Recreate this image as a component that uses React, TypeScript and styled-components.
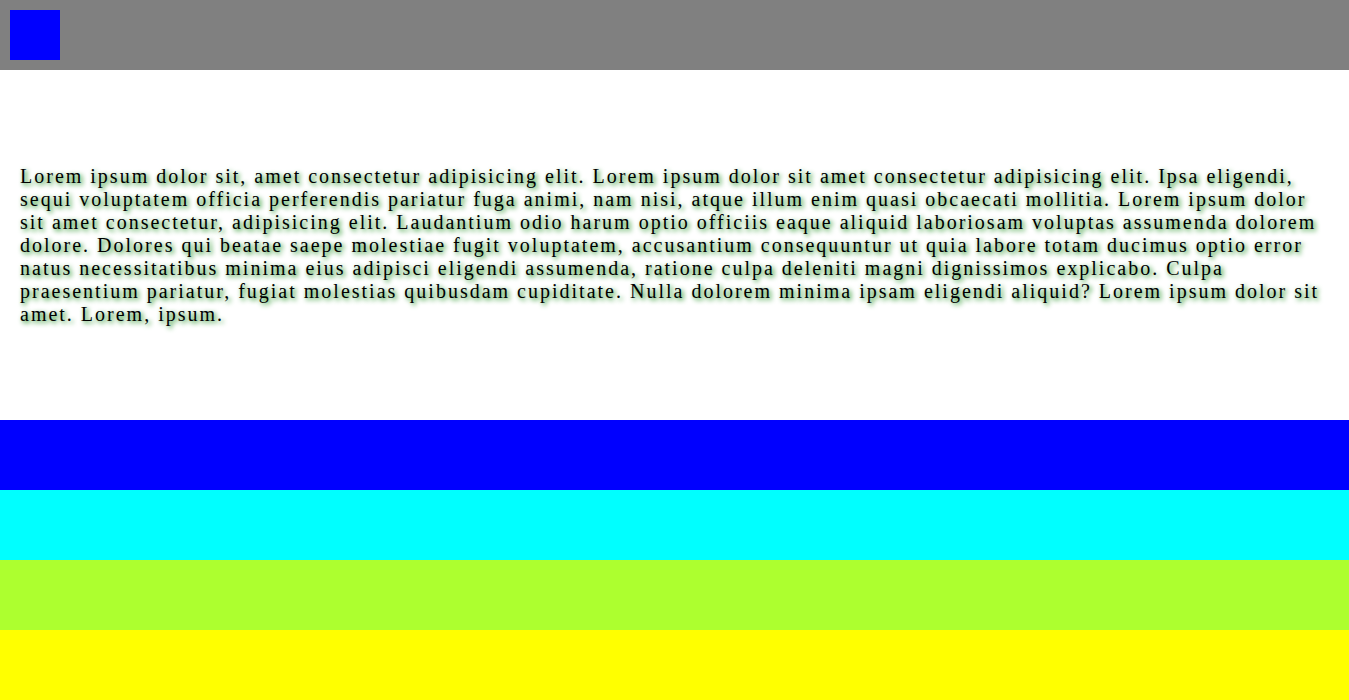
import React from "react";
import styled, { createGlobalStyle } from "styled-components";

const Global = createGlobalStyle`
  html, body { margin: 0; padding: 0; }
  body { font-family: "Liberation Serif", "Times New Roman", serif; background: #fff; }
`;

const Header = styled.header`
  height: 70px;
  background: #808080;
  padding: 10px;
  box-sizing: border-box;
`;

const Logo = styled.div`
  width: 50px;
  height: 50px;
  background: #0000ff;
`;

const Main = styled.main`
  height: 350px;
  display: flex;
  align-items: center;
  padding: 0 20px;
  box-sizing: border-box;
`;

const Text = styled.p`
  margin: 0;
  font-size: 20px;
  letter-spacing: 2px;
  color: #000;
  text-shadow: 2px 2px 5px green;
`;

const Band = styled.div<{ $bg: string }>`
  height: 70px;
  background: ${(p) => p.$bg};
`;

export default function App() {
  return (
    <>
      <Global />
      <Header>
        <Logo />
      </Header>
      <Main>
        <Text>
          Lorem ipsum dolor sit, amet consectetur adipisicing elit. Lorem ipsum dolor sit amet consectetur adipisicing elit. Ipsa eligendi, sequi voluptatem officia perferendis pariatur fuga animi, nam nisi, atque illum enim quasi obcaecati mollitia. Lorem ipsum dolor sit amet consectetur, adipisicing elit. Laudantium odio harum optio officiis eaque aliquid laboriosam voluptas assumenda dolorem dolore. Dolores qui beatae saepe molestiae fugit voluptatem, accusantium consequuntur ut quia labore totam ducimus optio error natus necessitatibus minima eius adipisci eligendi assumenda, ratione culpa deleniti magni dignissimos explicabo. Culpa praesentium pariatur, fugiat molestias quibusdam cupiditate. Nulla dolorem minima ipsam eligendi aliquid? Lorem ipsum dolor sit amet. Lorem, ipsum.
        </Text>
      </Main>
      <Band $bg="#0000ff" />
      <Band $bg="#00ffff" />
      <Band $bg="#adff2f" />
      <Band $bg="#ffff00" />
    </>
  );
}
